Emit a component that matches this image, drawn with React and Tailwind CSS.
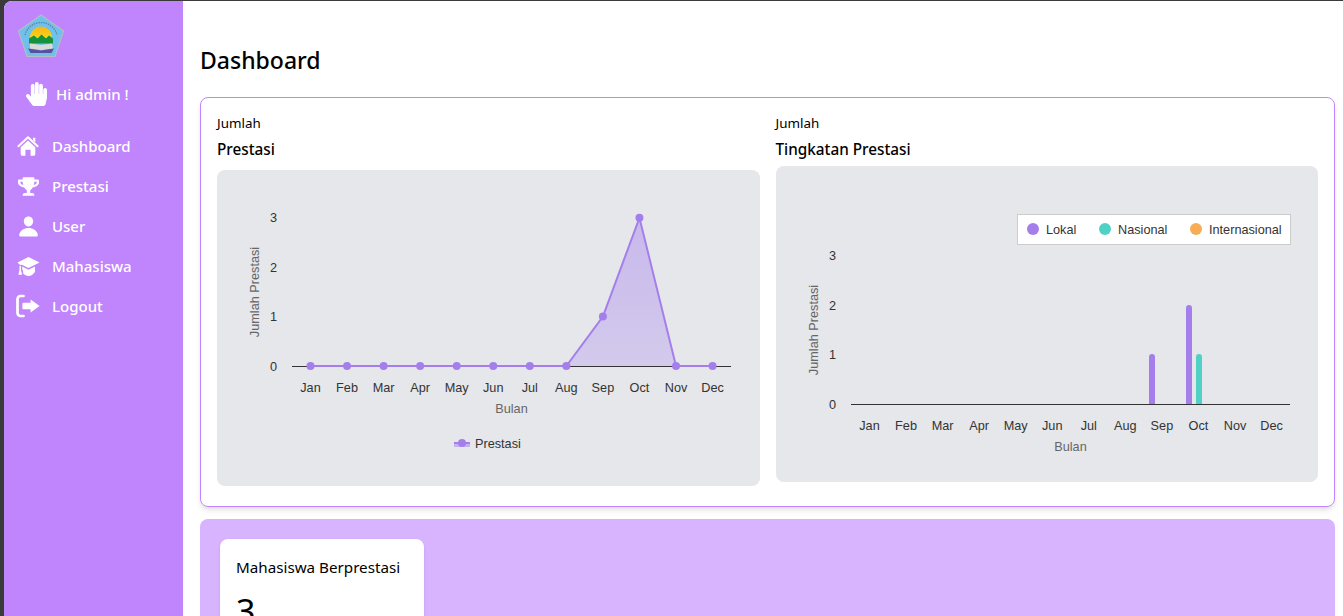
import React from "react";
import { FaTrophy, FaHandPaper } from "react-icons/fa";
import { IoPerson } from "react-icons/io5";

const months = ["Jan", "Feb", "Mar", "Apr", "May", "Jun", "Jul", "Aug", "Sep", "Oct", "Nov", "Dec"];
const values = [0, 0, 0, 0, 0, 0, 0, 0, 1, 3, 0, 0];
const chartFont = { fontFamily: '"Liberation Sans", Arial, sans-serif' };

function HomeIcon({ className }) {
  return (
    <svg viewBox="0 0 24 24" fill="currentColor" className={className}>
      <path d="M1.5 12.2 L12 2.5 L22.5 12.2" fill="none" stroke="currentColor" strokeWidth="2.2" strokeLinecap="round" strokeLinejoin="round" />
      <path d="M17.5 3 h2.5 v5 l-2.5 -2.3 Z" />
      <path fillRule="evenodd" d="M12 6 L20 13.3 V21 a1.6 1.6 0 0 1 -1.6 1.6 H14.8 V16 H9.2 V22.6 H5.6 A1.6 1.6 0 0 1 4 21 V13.3 Z" />
    </svg>
  );
}

function CapIcon({ className }) {
  return (
    <svg viewBox="0 0 24 24" fill="currentColor" className={className}>
      <path d="M12 2 L23.5 7.8 L12 13.6 L4.5 9.9 V10.8 L2.6 10 L0.5 7.8 Z" />
      <path d="M5.5 12.1 L12 15.4 L18.8 12 V17.4 C17 20.4 14.5 21.8 12 21.8 C10 21.8 8 21 6.4 19.4 V16 H5.5 Z" />
      <path d="M2.6 11.5 h1.5 v4.2 l1.3 5 h-4 l1.2 -5 Z" />
    </svg>
  );
}

function LogoutIcon({ className }) {
  return (
    <svg viewBox="0 0 24 24" fill="currentColor" className={className}>
      <path d="M7.5 2 H4.5 A3 3 0 0 0 1.5 5 V19 A3 3 0 0 0 4.5 22 H7.5" fill="none" stroke="currentColor" strokeWidth="2.7" strokeLinecap="round" />
      <path d="M14.6 5.4 L23.6 12 L14.6 18.6 V15.2 H7.4 A1 1 0 0 1 6.4 14.2 V9.8 A1 1 0 0 1 7.4 8.8 H14.6 Z" />
    </svg>
  );
}

const menu = [
  { label: "Dashboard", icon: HomeIcon, size: "h-[22px] w-[22px]" },
  { label: "Prestasi", icon: FaTrophy, size: "h-[21px] w-[21px]" },
  { label: "User", icon: IoPerson, size: "h-[23px] w-[23px]" },
  { label: "Mahasiswa", icon: CapIcon, size: "h-[23px] w-[23px]" },
  { label: "Logout", icon: LogoutIcon, size: "h-6 w-6" },
];

function Logo() {
  return (
    <svg width="48" height="44" viewBox="0 0 48 44">
      <defs>
        <linearGradient id="sunFill" x1="0" y1="0" x2="0" y2="1">
          <stop offset="0" stopColor="#fcb414" />
          <stop offset="1" stopColor="#f7d51d" />
        </linearGradient>
      </defs>
      <path d="M24 1 L46.5 17 L38 42.5 L10 42.5 L1.5 17 Z" fill="#6ec1ea" stroke="#b4bcc4" strokeWidth="1.2" />
      <path d="M8 21 A16.5 16.5 0 0 1 40 21" fill="none" stroke="#5f7f99" strokeWidth="1.2" strokeDasharray="1.4 1" />
      <path d="M13 24 A11 11.5 0 0 1 35 24 Z" fill="url(#sunFill)" />
      <path d="M12 29.5 V24.5 L17 21.5 L20.5 24.5 L24.5 20.5 L29 24.5 L32 21.5 L36 24.5 V29.5 Z" fill="#16923f" />
      <path d="M13 29.5 L24 31 L35 29.5 L36 34.5 L24 36 L13 34.5 Z" fill="#d9dcd6" />
      <path d="M11 34.5 L24 36.5 L37 34.5 L34.5 39 L13.5 39 Z" fill="#5b4fa0" />
    </svg>
  );
}

function Axis({ y0, x0, axisStart, axisEnd }) {
  return (
    <g fontSize="12.7" fill="#333" style={chartFont}>
      {[0, 1, 2, 3].map((n) => (
        <text key={n} x={axisStart - 15} y={y0 - n * 49.4 + 4.5} textAnchor="end">
          {n}
        </text>
      ))}
      <line x1={axisStart} x2={axisEnd} y1={y0 + 0.5} y2={y0 + 0.5} stroke="#333" strokeWidth="1" />
      {months.map((m, i) => (
        <text key={m} x={x0 + i * 36.55} y={y0 + 26} textAnchor="middle">
          {m}
        </text>
      ))}
      <text x={(axisStart + axisEnd) / 2} y={y0 + 46.5} textAnchor="middle" fill="#666">
        Bulan
      </text>
      <text
        transform={`translate(${axisStart - 33} ${y0 - 74}) rotate(-90)`}
        textAnchor="middle"
        fill="#666"
      >
        Jumlah Prestasi
      </text>
    </g>
  );
}

function LineChart() {
  const y0 = 196;
  const x0 = 93.5;
  const pts = values.map((v, i) => [x0 + i * 36.55, y0 - v * 49.4]);
  const line = pts.map((p) => p.join(",")).join(" ");
  return (
    <svg width="543" height="316" className="block">
      <defs>
        <linearGradient id="areaFill" x1="0" y1="0" x2="0" y2="1">
          <stop offset="0" stopColor="#a47fec" stopOpacity="0.45" />
          <stop offset="1" stopColor="#a47fec" stopOpacity="0.28" />
        </linearGradient>
      </defs>
      <Axis y0={y0} x0={x0} axisStart={75} axisEnd={514} />
      <polygon points={`${pts[0][0]},${y0} ${line} ${pts[11][0]},${y0}`} fill="url(#areaFill)" />
      <polyline points={line} fill="none" stroke="#a47fec" strokeWidth="2" />
      {pts.map((p, i) => (
        <circle key={i} cx={p[0]} cy={p[1]} r="4" fill="#a47fec" />
      ))}
      <g style={chartFont}>
        <rect x="237" y="273" width="16" height="4" fill="#a47fec" opacity="0.5" />
        <line x1="237" x2="253" y1="273" y2="273" stroke="#a47fec" strokeWidth="2" />
        <circle cx="245" cy="273" r="4" fill="#a47fec" />
        <text x="258" y="277.5" fontSize="12.7" fill="#333">
          Prestasi
        </text>
      </g>
    </svg>
  );
}

function BarChart() {
  const y0 = 238;
  return (
    <svg width="542" height="316" className="block">
      <Axis y0={y0} x0={93.5} axisStart={75} axisEnd={514} />
      <rect x="241.5" y="48.5" width="273" height="30" fill="#fff" stroke="#ccc" />
      <g fontSize="12.7" fill="#333" style={chartFont}>
        <circle cx="257" cy="63" r="6" fill="#a47fec" />
        <text x="270" y="67.5">Lokal</text>
        <circle cx="329" cy="63" r="6" fill="#4fd1c5" />
        <text x="342" y="67.5">Nasional</text>
        <circle cx="420" cy="63" r="6" fill="#f6ad55" />
        <text x="433" y="67.5">Internasional</text>
      </g>
      <path d="M373 238 V191 a3 3 0 0 1 6 0 V238 Z" fill="#a47fec" />
      <path d="M410 238 V142 a3 3 0 0 1 6 0 V238 Z" fill="#a47fec" />
      <path d="M420 238 V191 a3 3 0 0 1 6 0 V238 Z" fill="#4fd1c5" />
    </svg>
  );
}

export default function App() {
  return (
    <div className="h-screen overflow-hidden bg-[#3a3a3a] pt-px pl-1 font-['Noto_Sans','Lato',sans-serif]">
      <div className="flex h-full overflow-hidden rounded-tl-lg bg-white">
        <aside className="w-[179px] shrink-0 bg-[#c084fc] text-white">
          <div className="pl-[13px] pt-[13px]">
            <Logo />
          </div>
          <div className="mt-[24px] flex h-6 items-center pl-[22px]">
            <FaHandPaper className="h-6 w-[21px]" />
            <span className="ml-[9px] text-[15px] font-medium">Hi admin !</span>
          </div>
          <nav className="mt-[20px]">
            {menu.map(({ label, icon: Icon, size }) => (
              <div key={label} className="flex h-10 items-center pl-[13px]">
                <span className="flex w-[22px] justify-center">
                  <Icon className={`${size} shrink-0`} />
                </span>
                <span className="ml-[13px] text-[15px] font-medium">{label}</span>
              </div>
            ))}
          </nav>
        </aside>

        <main className="min-w-0 flex-1 pl-[17px] pr-2 text-black">
          <h1 className="mt-[43px] text-[23px] font-medium leading-8">Dashboard</h1>

          <section className="mt-[21px] h-[410px] rounded-lg border border-[#c084fc] px-4 pt-[15px] shadow-md">
            <div className="grid grid-cols-2 gap-4">
              <div>
                <p className="text-[13.4px] leading-5">Jumlah</p>
                <p className="mt-1 text-[15.3px] font-medium leading-6">Prestasi</p>
                <div className="mt-[9px] h-[316px] overflow-hidden rounded-lg bg-[#e5e7eb]">
                  <LineChart />
                </div>
              </div>
              <div>
                <p className="text-[13.4px] leading-5">Jumlah</p>
                <p className="mt-1 text-[15.3px] font-medium leading-6">Tingkatan Prestasi</p>
                <div className="mt-[5px] h-[316px] overflow-hidden rounded-lg bg-[#e5e7eb]">
                  <BarChart />
                </div>
              </div>
            </div>
          </section>

          <section className="mt-3 h-[200px] rounded-lg bg-[#d8b4fe] p-5">
            <div className="h-[160px] w-[204px] rounded-lg bg-white px-4 pt-4 shadow">
              <p className="whitespace-nowrap text-[15.2px] font-normal leading-6">Mahasiswa Berprestasi</p>
              <p className="mt-3 text-[34px] font-normal leading-10">3</p>
            </div>
          </section>
        </main>
      </div>
    </div>
  );
}
